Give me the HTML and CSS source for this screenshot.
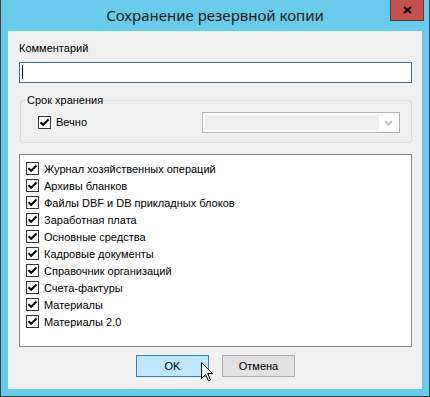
FILE: index.html
```html
<!DOCTYPE html>
<html lang="ru">
<head>
  <meta charset="UTF-8">
  <title>Сохранение резервной копии</title>
  <link rel="stylesheet" href="styles.css">
</head>
<body>
  <div class="window">
    <!-- Title bar -->
    <div class="titlebar">
      <span class="title">Сохранение резервной копии</span>
      <button class="close-button" type="button">
        <svg width="9" height="8" viewBox="0 0 9 8"><path d="M1 1 L8 7 M8 1 L1 7" stroke="#000" stroke-width="2.2" fill="none"/></svg>
      </button>
    </div>

    <div class="dialog">
      <!-- Comment -->
      <label class="field-label">Комментарий</label>
      <div class="text-input"><span class="caret"></span></div>

      <!-- Storage period -->
      <fieldset class="group">
        <legend>Срок хранения</legend>
        <div class="group-row">
          <label class="check">
            <span class="check-box"><svg width="11" height="11" viewBox="0 0 11 11"><path d="M1.5 5.2 L4.2 7.8 L9.5 2.5" stroke="#000" stroke-width="2" fill="none"/></svg></span>
            Вечно
          </label>
          <div class="combo">
            <span class="combo-field"></span>
            <span class="combo-arrow"><svg width="9" height="6" viewBox="0 0 9 6"><path d="M1 1 L4.5 4.5 L8 1" stroke="#c4c4c4" stroke-width="2" fill="none"/></svg></span>
          </div>
        </div>
      </fieldset>

      <!-- Items -->
      <ul class="check-list" id="checkList"></ul>

      <!-- Buttons -->
      <div class="buttons">
        <button type="button" class="btn btn-ok">OK</button>
        <button type="button" class="btn">Отмена</button>
      </div>
    </div>

    <svg class="cursor" width="13" height="20" viewBox="0 0 13 20">
      <path d="M0.5 0.5 L0.5 16.5 L4.5 12.5 L7.5 19 L9.5 18 L6.7 11.6 L11.5 11.6 Z" fill="#fff" stroke="#000" stroke-width="1" stroke-linejoin="miter"/>
    </svg>
  </div>

  <script>
    const items = [
      'Журнал хозяйственных операций',
      'Архивы бланков',
      'Файлы DBF и DB прикладных блоков',
      'Заработная плата',
      'Основные средства',
      'Кадровые документы',
      'Справочник организаций',
      'Счета-фактуры',
      'Материалы',
      'Материалы 2.0'
    ];

    const checkSvg = '<svg width="11" height="11" viewBox="0 0 11 11"><path d="M1.5 5.2 L4.2 7.8 L9.5 2.5" stroke="#000" stroke-width="2" fill="none"/></svg>';
    const list = document.getElementById('checkList');
    list.innerHTML = items.map(item =>
      `<li class="check-item"><span class="check-box">${checkSvg}</span>${item}</li>`
    ).join('');
  </script>
</body>
</html>
```

FILE: styles.css
```css
/* Page */
body {
  margin: 0;
  font-family: 'Liberation Sans', Arial, sans-serif;
  font-size: 11px;
  color: #000;
  background: #ffffff;
}

/* Window frame */
.window {
  position: relative;
  width: 430px;
  height: 397px;
  box-sizing: border-box;
  background: #69cbea;
  border: 1px solid #3d3d3d;
  border-top: none;
  padding: 0 7px 7px;
  display: flex;
  flex-direction: column;
}

.titlebar {
  height: 31px;
  box-sizing: border-box;
  padding-bottom: 2px;
  display: flex;
  align-items: center;
  justify-content: center;
}

.title {
  font-family: 'Noto Sans', sans-serif;
  font-size: 15px;
  line-height: 20px;
  color: #1a1a1a;
}

.close-button {
  position: absolute;
  top: 0;
  right: 5px;
  width: 34px;
  height: 21px;
  padding: 0;
  background: #c75050;
  border: 1px solid #5e3a36;
  border-top: none;
  display: flex;
  align-items: center;
  justify-content: center;
}

/* Dialog body */
.dialog {
  flex: 1;
  background: #f0f0f0;
  padding: 10px 10px 0 11px;
  display: flex;
  flex-direction: column;
}

.field-label {
  line-height: 15px;
}

.text-input {
  margin-top: 6px;
  height: 21px;
  box-sizing: border-box;
  background: #ffffff;
  border: 1px solid #3f6f98;
  padding: 2px 0 0 2px;
}

.caret {
  display: block;
  width: 1px;
  height: 14px;
  background: #000;
}

/* Group box */
.group {
  margin: 10px 0 0 1px;
  padding: 0 5px 9px;
  border: 1px solid #d5dfe5;
  border-radius: 3px;
  min-width: 0;
}

.group legend {
  padding: 0 1px;
  line-height: 15px;
}

.group-row {
  margin-top: 4px;
  display: flex;
  align-items: center;
}

.check {
  display: flex;
  align-items: center;
  gap: 5px;
  margin-left: 12px;
  line-height: 15px;
}

.check-box {
  width: 13px;
  height: 13px;
  box-sizing: border-box;
  border: 1px solid #333333;
  background: #ffffff;
  display: flex;
  align-items: center;
  justify-content: center;
  flex: none;
}

.combo {
  margin-left: auto;
  margin-right: 6px;
  width: 198px;
  height: 21px;
  box-sizing: border-box;
  border: 1px solid #adb2b5;
  background: #ffffff;
  padding: 2px;
  display: flex;
}

.combo-field {
  flex: 1;
  background: #efefef;
}

.combo-arrow {
  width: 18px;
  display: flex;
  align-items: center;
  justify-content: center;
  padding-top: 1px;
}

/* Checked list */
.check-list {
  list-style: none;
  margin: 11px 0 0;
  height: 193px;
  box-sizing: border-box;
  padding: 5px 6px;
  background: #ffffff;
  border: 1px solid #828790;
}

.check-item {
  height: 17px;
  display: flex;
  align-items: center;
  gap: 5px;
}

/* Buttons */
.buttons {
  margin-top: 8px;
  display: flex;
  justify-content: center;
  gap: 13px;
}

.btn {
  width: 73px;
  height: 22px;
  padding: 0;
  font-family: inherit;
  font-size: 11px;
  color: #000;
  background: #e1e1e1;
  border: 1px solid #adadad;
}

.btn-ok {
  background: #bee6fd;
  border-color: #3c7fb1;
}

/* Mouse pointer */
.cursor {
  position: absolute;
  left: 200px;
  top: 362px;
}
```
